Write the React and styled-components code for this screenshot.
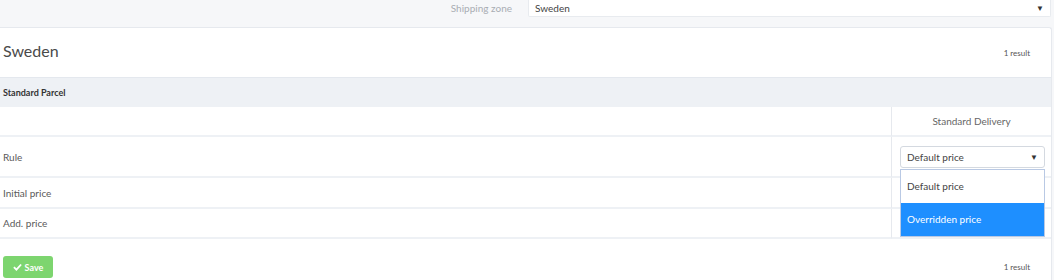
import React from "react";
import styled, { createGlobalStyle } from "styled-components";

const GlobalStyle = createGlobalStyle`
  body {
    margin: 0;
    background: #f6f7f9;
    font-family: Lato, "Open Sans", sans-serif;
    color: #555;
  }
`;

const Page = styled.div`
  width: 1054px;
  height: 280px;
  overflow: hidden;
`;

const TopBar = styled.div`
  height: 25px;
  display: flex;
  justify-content: flex-end;
  align-items: flex-start;
  padding-right: 3px;
`;

const ZoneLabel = styled.span`
  font-size: 10px;
  color: #a9adb3;
  line-height: 17px;
  margin-right: 16px;
`;

const ZoneSelect = styled.div`
  box-sizing: border-box;
  width: 523px;
  height: 17px;
  background: #fff;
  border: 1px solid #e8ebef;
  border-top: none;
  border-radius: 0 0 2px 2px;
  display: flex;
  align-items: center;
  justify-content: space-between;
  padding: 0 6px;
  font-size: 10px;
  color: #444;
`;

const Caret = styled.span`
  font-size: 8px;
  color: #333;
`;

const Card = styled.div`
  margin-top: 2px;
  margin-right: 2px;
  background: #fff;
  border: 1px solid #e6e9ee;
  border-left: none;
  border-bottom: none;
  border-radius: 0 3px 0 0;
  height: 253px;
`;

const CardHeader = styled.div`
  height: 49px;
  display: flex;
  align-items: center;
  justify-content: space-between;
  padding: 0 21px 0 3px;
`;

const Title = styled.h2`
  margin: 0 0 4px;
  font-size: 16px;
  font-weight: 400;
  color: #4a4a4a;
`;

const ResultCount = styled.span`
  font-size: 8px;
  color: #555;
`;

const GroupRow = styled.div`
  height: 30px;
  background: #eef1f5;
  border-top: 1px solid #e4e8ee;
  box-sizing: border-box;
  display: flex;
  align-items: center;
  padding-left: 3px;
  font-size: 9px;
  font-weight: 700;
  color: #333;
`;

const Table = styled.div`
  display: grid;
  grid-template-columns: 1fr 160px;
`;

const Cell = styled.div`
  height: ${(p) => p.h}px;
  box-sizing: border-box;
  border-bottom: 2px solid #eef1f5;
  display: flex;
  align-items: center;
  justify-content: ${(p) => (p.center ? "center" : "flex-start")};
  padding-left: ${(p) => (p.side ? "8px" : "3px")};
  border-left: ${(p) => (p.side ? "1px solid #e6e9ee" : "none")};
  font-size: 10px;
  color: #5a5a5a;
  position: relative;
`;

const HeaderCell = styled(Cell)`
  padding-left: 0;
  color: #666;
`;

const SelectWrap = styled.div`
  position: relative;
  width: 145px;
`;

const RuleSelect = styled.div`
  box-sizing: border-box;
  height: 22px;
  border: 1px solid #d4d9e0;
  border-radius: 3px;
  background: #fff;
  display: flex;
  align-items: center;
  justify-content: space-between;
  padding: 0 6px;
  font-size: 10px;
  color: #444;
`;

const Menu = styled.ul`
  position: absolute;
  top: 23px;
  left: 0;
  width: 145px;
  margin: 0;
  padding: 0;
  list-style: none;
  box-sizing: border-box;
  border: 1px solid #b9c9e4;
  background: #fff;
  z-index: 2;
`;

const Option = styled.li`
  height: 33px;
  display: flex;
  align-items: center;
  padding-left: 6px;
  font-size: 10px;
  background: ${(p) => (p.active ? "#1e8fff" : "#fff")};
  color: ${(p) => (p.active ? "#fff" : "#444")};
`;

const Footer = styled.div`
  display: flex;
  justify-content: space-between;
  align-items: center;
  padding: 17px 21px 0 3px;
`;

const SaveButton = styled.button`
  height: 22px;
  width: 50px;
  border: none;
  border-radius: 3px;
  background: #7dd56f;
  color: #fff;
  font-family: Lato, sans-serif;
  font-size: 9px;
  font-weight: 700;
  display: flex;
  align-items: center;
  justify-content: center;
  gap: 3px;
  padding: 0;
`;

export default function App() {
  return (
    <Page>
      <GlobalStyle />
      <TopBar>
        <ZoneLabel>Shipping zone</ZoneLabel>
        <ZoneSelect>
          <span>Sweden</span>
          <Caret>▼</Caret>
        </ZoneSelect>
      </TopBar>
      <Card>
        <CardHeader>
          <Title>Sweden</Title>
          <ResultCount>1 result</ResultCount>
        </CardHeader>
        <GroupRow>Standard Parcel</GroupRow>
        <Table>
          <Cell h={30} />
          <HeaderCell h={30} side center>
            Standard Delivery
          </HeaderCell>
          <Cell h={41}>Rule</Cell>
          <Cell h={41} side>
            <SelectWrap>
              <RuleSelect>
                <span>Default price</span>
                <Caret>▼</Caret>
              </RuleSelect>
              <Menu>
                <Option>Default price</Option>
                <Option active>Overridden price</Option>
              </Menu>
            </SelectWrap>
          </Cell>
          <Cell h={31}>Initial price</Cell>
          <Cell h={31} side />
          <Cell h={30}>Add. price</Cell>
          <Cell h={30} side />
        </Table>
        <Footer>
          <SaveButton>
            <svg width="9" height="8" viewBox="0 0 10 8">
              <path d="M1 4.2 L3.8 7 L9 1.2" stroke="#fff" strokeWidth="2" fill="none" />
            </svg>
            Save
          </SaveButton>
          <ResultCount>1 result</ResultCount>
        </Footer>
      </Card>
    </Page>
  );
}
